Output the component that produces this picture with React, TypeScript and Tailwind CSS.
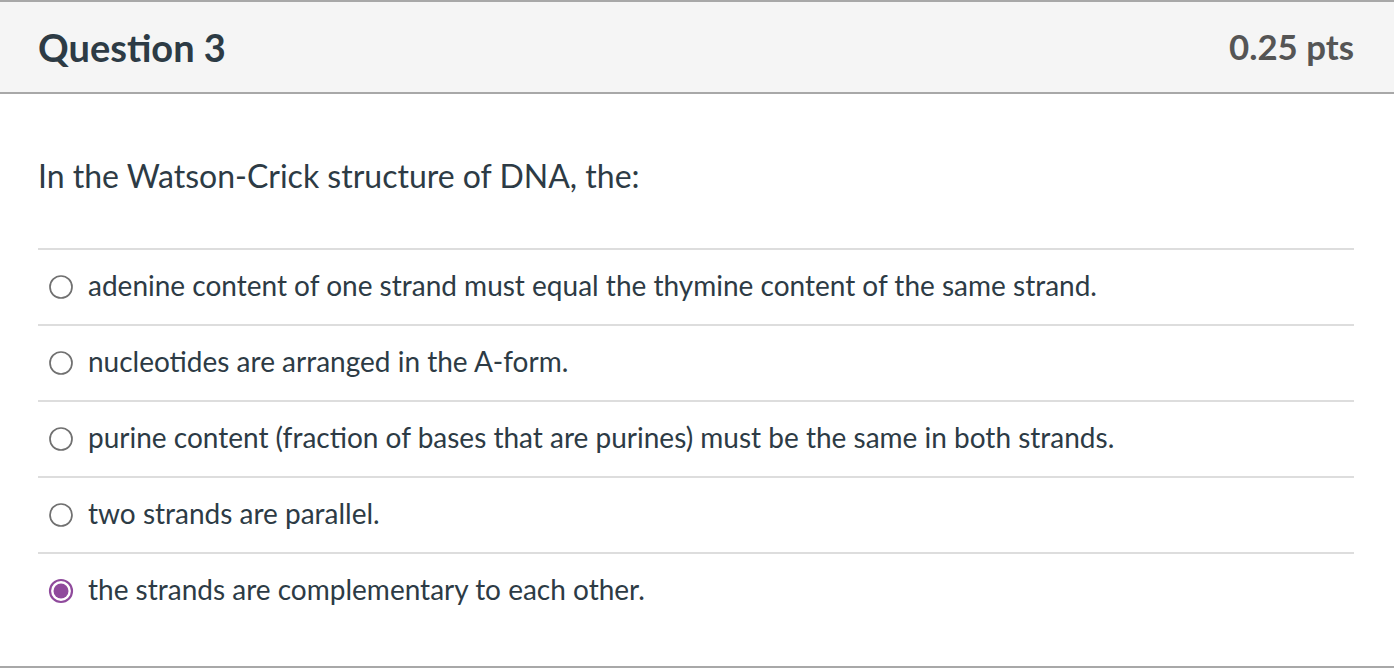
import React from "react";

const options = [
  "adenine content of one strand must equal the thymine content of the same strand.",
  "nucleotides are arranged in the A-form.",
  "purine content (fraction of bases that are purines) must be the same in both strands.",
  "two strands are parallel.",
  "the strands are complementary to each other.",
];

function Radio({ checked }: { checked: boolean }) {
  if (checked) {
    return (
      <svg width="26" height="26" viewBox="0 0 26 26" className="shrink-0">
        <circle cx="13" cy="13" r="11" fill="white" stroke="#8f4a9c" strokeWidth="2.2" />
        <circle cx="13" cy="13" r="7.5" fill="#8f4a9c" />
      </svg>
    );
  }
  return (
    <svg width="26" height="26" viewBox="0 0 26 26" className="shrink-0">
      <circle cx="13" cy="13" r="11" fill="white" stroke="#707070" strokeWidth="1.7" />
    </svg>
  );
}

export default function App() {
  return (
    <div
      className="w-[1394px] h-[672px] bg-white overflow-hidden"
      style={{ fontFamily: "Lato, 'Noto Sans', sans-serif" }}
    >
      <div className="border-t-2 border-b-2 border-[#a8a8a8] bg-[#f5f5f5] h-[94px] flex items-center justify-between pl-[38px] pr-[40px]">
        <div className="text-[38px] font-bold text-[#2d3b45] leading-none">Question 3</div>
        <div className="text-[34.8px] font-bold text-[#555555] leading-none">0.25 pts</div>
      </div>
      <div className="pl-[38px] pr-[40px] h-[574px] border-b-2 border-[#a8a8a8] flex flex-col">
        <div className="h-[154px] flex items-center text-[32px] text-[#2d3b45] pt-[10px]">
          In the Watson-Crick structure of DNA, the:
        </div>
        {options.map((o, i) => (
          <div key={i} className="h-[76px] border-t-2 border-[#dddddd] flex items-center pl-[10px] gap-[14px] text-[28px] text-[#2d3b45]">
            <Radio checked={i === 4} />
            <span className="leading-none pb-[4px]">{o}</span>
          </div>
        ))}
      </div>
    </div>
  );
}
